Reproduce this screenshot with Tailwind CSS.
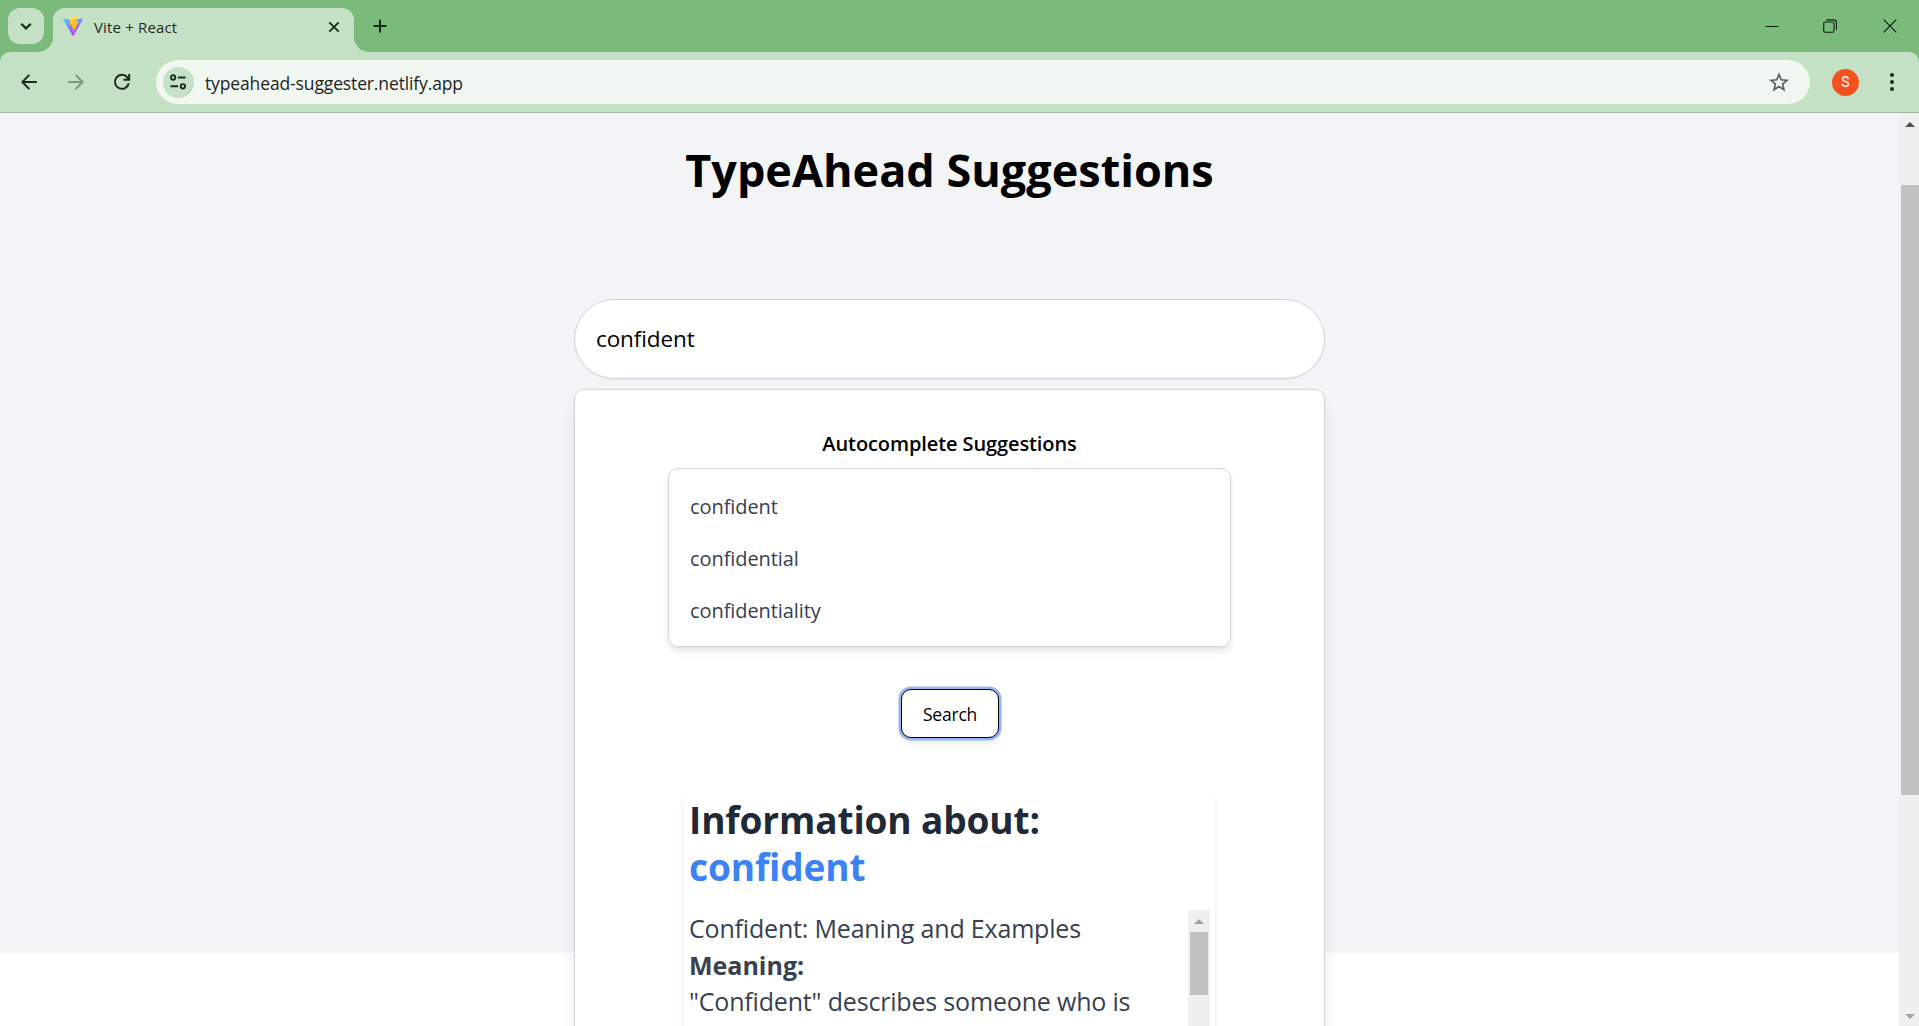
<!DOCTYPE html>
<html lang="en">
<head>
<meta charset="utf-8">
<title>Vite + React</title>
<script src="https://cdn.jsdelivr.net/npm/@tailwindcss/browser@4"></script>
</head>
<body class="h-screen overflow-hidden bg-[#7abb7c] font-['Open_Sans',sans-serif] text-black">
<div class="flex h-[1026px] w-[1919px] flex-col overflow-hidden">

  <!-- Tab strip -->
  <header class="flex h-[52px] shrink-0 items-start pt-2 pl-2">
    <button class="flex size-9 items-center justify-center rounded-xl bg-[#c5e1c5]">
      <svg class="size-[14px]" viewBox="0 0 14 14" fill="none" stroke="#1c2a1d" stroke-width="2.2"><path d="M2.2 4.8 7 9.4l4.8-4.6"/></svg>
    </button>
    <div class="relative ml-[9px] flex h-11 w-[301px] items-center rounded-t-xl bg-[#c5e1c5] pl-[10px] pr-3">
      <svg class="absolute bottom-0 -left-[15px] size-[15px]" viewBox="0 0 15 15" fill="#c5e1c5"><path d="M15 0v15H0A15 15 0 0 0 15 0Z"/></svg>
      <svg class="absolute -right-[15px] bottom-0 size-[15px]" viewBox="0 0 15 15" fill="#c5e1c5"><path d="M0 0v15h15A15 15 0 0 1 0 0Z"/></svg>
      <svg class="mb-2 h-5 w-5" viewBox="0 0 32 32">
        <defs>
          <linearGradient id="va" x1="0" y1="0" x2=".6" y2="1"><stop offset="0" stop-color="#41d1ff"/><stop offset="1" stop-color="#bd34fe"/></linearGradient>
          <linearGradient id="vb" x1=".4" y1="0" x2=".6" y2="1"><stop offset="0" stop-color="#ffea83"/><stop offset=".2" stop-color="#ffd030"/><stop offset="1" stop-color="#ffa800"/></linearGradient>
        </defs>
        <path fill="url(#va)" d="m31.8 5.3-15 26.2c-.3.6-1.1.6-1.4 0L.1 5.3c-.3-.6.2-1.3.9-1.2l15 2.6L30.900 4.100c.7-.1 1.200.6.9 1.200Z"/>
        <path fill="url(#vb)" d="m22.900.1-11 2.100c-.2 0-.3.200-.3.400l-.8 11.300c0 .3.200.5.500.400l3.100-.7c.300-.1.600.2.500.5l-.9 4.400c-.1.3.2.6.5.5l1.900-.6c.3-.1.6.2.5.5l-1.400 7c-.1.400.5.700.7.300l8.900-17.300c.1-.3-.1-.6-.4-.6l-3.200.6c-.3.1-.6-.2-.5-.5l2-7.800c.1-.3-.2-.600-.5-.5Z"/>
      </svg>
      <span class="mb-[7px] ml-[11px] text-[15px] leading-5 tracking-[0.16px] text-[#1f2a20]">Vite + React</span>
      <svg class="mb-[7px] ml-auto size-4" viewBox="0 0 16 16" fill="none" stroke="#1c2a1d" stroke-width="1.900"><path d="m3.300 3.300 9.400 9.400M12.700 3.300l-9.400 9.400"/></svg>
    </div>
    <svg class="mt-[11px] ml-[19px] size-[14px]" viewBox="0 0 14 14" fill="none" stroke="#1c2a1d" stroke-width="2"><path d="M7 .5v13M.5 7h13"/></svg>
    <div class="ml-auto flex h-9 items-center text-[#1a1a1a]">
      <svg class="mr-[44px] size-[14px]" viewBox="0 0 14 14" stroke="#101810"><path d="M.5 7.500h13"/></svg>
      <svg class="mr-[46px] size-[14px]" viewBox="0 0 14 14" fill="none" stroke="#101810" stroke-width="1.100"><rect x=".7" y="3" width="10.300" height="10.300" rx="1.500"/><path d="M3.300 .9h7.200a3 3 0 0 1 3 3v7.200"/></svg>
      <svg class="mr-[22px] size-[14px]" viewBox="0 0 14 14" stroke="#101810" stroke-width="1.200"><path d="m.7.7 12.600 12.600M13.300.7.7 13.300"/></svg>
    </div>
  </header>

  <!-- Toolbar -->
  <nav class="flex h-[61px] shrink-0 items-center rounded-t-[10px] border-b border-[#a0b8a0] bg-[#c5e1c5] pl-[21px]">
    <svg class="size-4" viewBox="0 0 16 16" fill="none" stroke="#1c2a1d" stroke-width="2"><path d="M15.800 8H1.500M8.300.9 1.300 8l7 7.100"/></svg>
    <svg class="ml-[31px] size-4" viewBox="0 0 16 16" fill="none" stroke="#7f967f" stroke-width="2"><path d="M.2 8h14.300M7.700.9l7 7.100-7 7.100"/></svg>
    <svg class="ml-[29px] size-[18px]" viewBox="0 0 18 18" fill="none" stroke="#1c2a1d" stroke-width="2"><path d="M15.800 10.200A7 7 0 1 1 14.300 4.300L16 6.200M16.200 1v5.700h-5.700"/></svg>
    <div class="ml-[25px] flex h-11 w-[1654px] items-center rounded-full bg-[#f0f7f0] pl-[7px] pr-[21px]">
      <span class="flex size-[31px] items-center justify-center rounded-full bg-[#c5e1c5]">
        <svg class="-ml-px size-4" viewBox="0 0 16 16" fill="none" stroke="#1c2a1d" stroke-width="1.900"><circle cx="3.100" cy="3.500" r="2.200"/><path d="M8 3.500h7.500M.5 12.300H8"/><circle cx="12.900" cy="12.300" r="2.200"/></svg>
      </span>
      <span class="mt-px ml-[11px] text-[17.5px] leading-6 tracking-[-0.13px] text-[#1f1f1f]">typeahead-suggester.netlify.app</span>
      <svg class="ml-auto size-5" viewBox="0 0 20 20" fill="none" stroke="#55605a" stroke-width="1.700"><path d="m10 2.500 2.200 5.300 5.700.5-4.300 3.700 1.300 5.600-4.900-3-4.900 3L6.400 12 2.100 8.300l5.700-.5Z"/></svg>
    </div>
    <span class="ml-[22px] flex size-[27px] items-center justify-center rounded-full bg-[#f4511e] font-[Roboto,sans-serif] text-[14px] text-white">S</span>
    <svg class="ml-[31px] h-[18px] w-1" viewBox="0 0 4 18" fill="#1c2a1d"><circle cx="2" cy="2" r="2"/><circle cx="2" cy="9" r="2"/><circle cx="2" cy="16" r="2"/></svg>
  </nav>

  <!-- Page -->
  <div class="flex h-[913px] overflow-hidden bg-white">
    <main class="flex h-[840px] w-[1899px] flex-col items-center bg-gray-100 pt-8">
      <h1 class="text-[45px] leading-[50px] font-bold">TypeAhead Suggestions</h1>
      <div class="mt-[104px] flex h-20 w-[751px] shrink-0 items-center rounded-[40px] border border-[#d1d5db] bg-white px-[21px] text-[22.5px] tracking-[-0.1px] shadow-xs">confident</div>

      <section class="mt-[10px] flex h-[800px] w-[751px] shrink-0 flex-col items-center rounded-[10px] border border-[#d1d5db] bg-white pt-10 shadow-[0_12px_19px_-4px_rgb(0_0_0/0.1),0_5px_8px_-5px_rgb(0_0_0/0.1)]">
        <h2 class="text-[20px] leading-7 font-semibold tracking-[-0.1px]">Autocomplete Suggestions</h2>
        <ul class="mt-[10px] w-[563px] rounded-[10px] border border-[#d1d5db] bg-white px-[21px] pt-3 pb-[9px] text-[20px] leading-[52px] tracking-[-0.08px] text-[#374151] shadow-[0_5px_8px_-1px_rgb(0_0_0/0.1),0_3px_5px_-3px_rgb(0_0_0/0.1)]">
          <li>confident</li>
          <li>confidential</li>
          <li>confidentiality</li>
        </ul>
        <button class="mt-[42px] flex h-[49px] w-[98px] shrink-0 items-center justify-center rounded-[10px] border border-black bg-white pl-px text-[17.5px] leading-6 tracking-[-0.2px] shadow-[0_0_0_2.5px_#93b5f8,0_5px_8px_-1px_rgb(0_0_0/0.1)]">Search</button>

        <article class="mt-[52px] h-[420px] w-[531px] shrink-0 rounded-[10px] bg-white px-[5px] pt-[6px] shadow-[0_5px_8px_-1px_rgb(0_0_0/0.1),0_3px_5px_-3px_rgb(0_0_0/0.1)]">
          <h3 class="text-[37px] leading-[47px] font-bold tracking-[-0.12px] text-[#1f2937]">Information about:<br><span class="text-[#3b82f6]">confident</span></h3>
          <div class="mt-5 flex h-[360px]">
            <div class="flex-1 text-[25px] leading-[36.5px] tracking-[-0.18px] whitespace-nowrap text-[#374151]">
              <p>Confident: Meaning and Examples</p>
              <p class="font-bold tracking-normal">Meaning:</p>
              <p>"Confident" describes someone who is</p>
            </div>
            <div class="flex w-[22px] flex-col items-center bg-[#f0f0f0] pt-[9px]">
              <svg class="h-[5px] w-[10px]" viewBox="0 0 10 5" fill="#a3a3a3"><path d="M0 5 5 0l5 5Z"/></svg>
              <div class="mt-2 h-[63px] w-[18px] bg-[#c1c1c1]"></div>
            </div>
          </div>
        </article>
      </section>
    </main>

    <aside class="flex w-5 flex-col items-end bg-[#f0f0f0] pt-[9px]">
      <svg class="mr-1 h-[5px] w-[10px]" viewBox="0 0 10 5" fill="#505050"><path d="M0 5 5 0l5 5Z"/></svg>
      <div class="mt-[58px] h-[610px] w-[18px] bg-[#c1c1c1]"></div>
      <svg class="mt-auto mr-1 mb-[7px] h-[5px] w-[10px]" viewBox="0 0 10 5" fill="#a3a3a3"><path d="M0 0h10L5 5Z"/></svg>
    </aside>
  </div>
</div>
</body>
</html>
